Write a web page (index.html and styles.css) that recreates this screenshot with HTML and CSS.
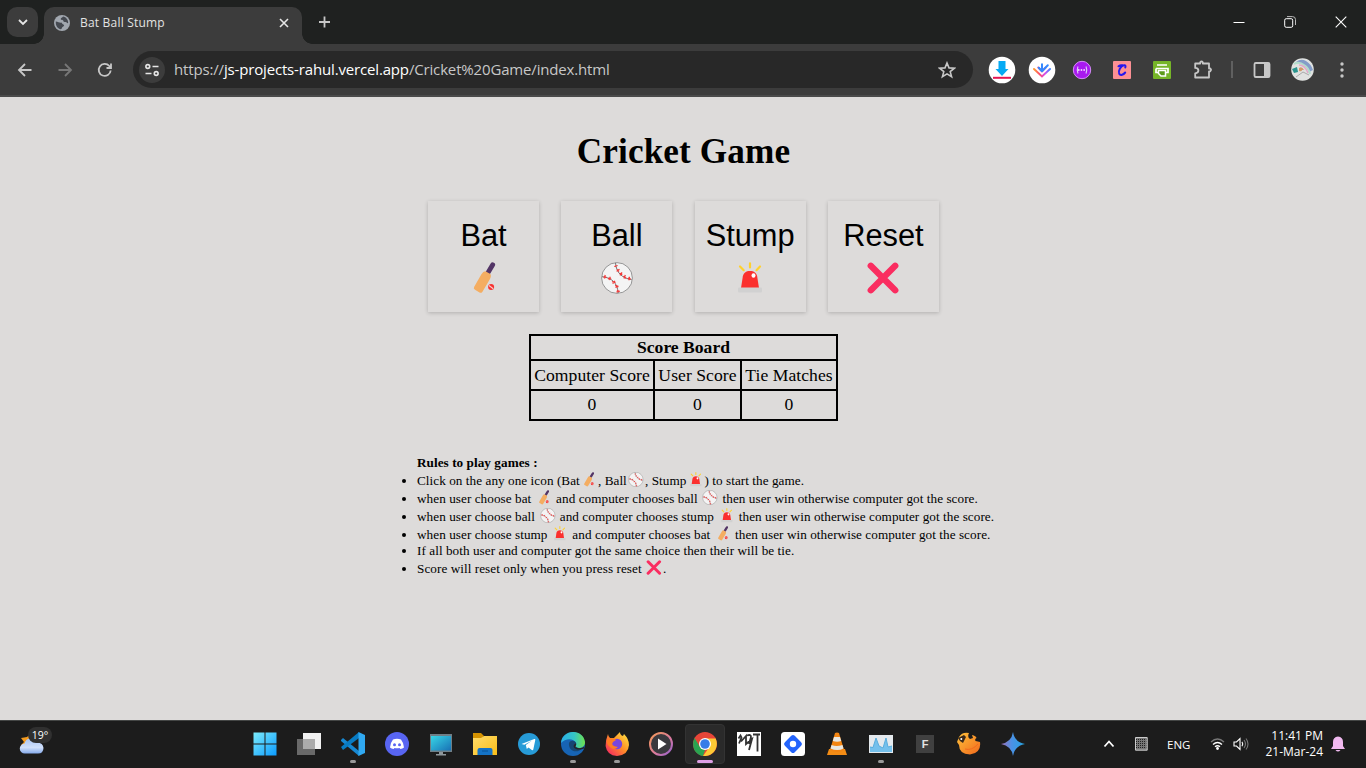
FILE: index.html
```html
<!DOCTYPE html>
<html lang="en">
<head>
<meta charset="utf-8">
<title>Bat Ball Stump</title>
<link rel="stylesheet" href="styles.css">
</head>
<body>
<svg class="defs" aria-hidden="true">
  <defs>
    <linearGradient id="gw" x2="1" y2="1"><stop stop-color="#7cecfc"/><stop offset="1" stop-color="#0b9bff"/></linearGradient>
    <linearGradient id="gcloud" x2="0" y2="1"><stop stop-color="#a9c4f3"/><stop offset=".6" stop-color="#d0e0fb"/><stop offset="1" stop-color="#85aaeb"/></linearGradient>
    <linearGradient id="gmon" x2="1" y2="1"><stop stop-color="#38d6e6"/><stop offset="1" stop-color="#1871b5"/></linearGradient>
    <linearGradient id="gfold" x2="1" y2="1"><stop stop-color="#ffdc6c"/><stop offset="1" stop-color="#f9bd17"/></linearGradient>
    <linearGradient id="gedge" x2="1" y2="0"><stop stop-color="#2aaee8"/><stop offset=".55" stop-color="#35c6c5"/><stop offset="1" stop-color="#6ee24d"/></linearGradient>
    <linearGradient id="gff" x1="1" x2="0" y2="1"><stop stop-color="#fff04a"/><stop offset=".45" stop-color="#ff9425"/><stop offset="1" stop-color="#f4156b"/></linearGradient>
    <linearGradient id="gmp" x2="1" y2="1"><stop stop-color="#f59a55"/><stop offset=".6" stop-color="#d879a0"/><stop offset="1" stop-color="#8f5fd0"/></linearGradient>
    <linearGradient id="ggem" x2="1" y2="0"><stop stop-color="#a070b8"/><stop offset=".45" stop-color="#4b91e5"/><stop offset="1" stop-color="#25a5e0"/></linearGradient>
    <linearGradient id="gbird" x2="1" y2="1"><stop stop-color="#ffc23a"/><stop offset="1" stop-color="#f0681c"/></linearGradient>
    <linearGradient id="gvee" x2="1" y2="0"><stop stop-color="#ff9b31"/><stop offset=".35" stop-color="#ff4c72"/><stop offset=".7" stop-color="#d64cf0"/><stop offset="1" stop-color="#3e82ff"/></linearGradient>
    <symbol id="bat" viewBox="0 0 42 32">
      <path d="M29.7 2.8 25.4 10" stroke="#533566" stroke-width="4.800" stroke-linecap="round"/>
      <path d="m22.400 9.300 5 2.800c.9 1.800.4 3.400-.7 5.400l-7.400 12.400q-1.200 1.400-2.800.5l-4.500-2.600q-1.900-1.200-.9-2.800l7.300-12.800q1.700-2.900 4-2.900z" fill="#f4ad61"/>
      <circle cx="28.100" cy="25" r="3" fill="#f8312f"/><path d="m26 23.500 4.200 3.200" stroke="#f2cfcd" stroke-width="1.100"/>
    </symbol>
    <symbol id="ball" viewBox="0 0 42 32">
      <circle cx="21" cy="16" r="15.400" fill="#f4f4f4" stroke="#959595" stroke-width="1"/>
      <path d="M19.500.8c.7 9.500 6 15.300 16.100 16.800M6 14.700c10 1 15.300 6.300 16.200 16.300" stroke="#747474" stroke-width="1" fill="none"/>
      <path d="m18.300 4.500 3.300-1m-2.300.5.5 1M20.500 9.300l3-2m-2.500.2 2 2M24 13.300l2-3m-2.200 1 2.500 1.300M28 16.500l1.300-3.500m-2 1.300 2.700 2M33 18.300l.4-3.500m-1.500 1.500 2.800.7M8.500 16.500l.7-3.500M7.500 15l3 .3M13 18l1.300-3.300M12 16.300l3.200.5M16.700 21.600l2.300-2.800m-3 .9 3.500 1M19.500 25.500l2.800-1.800m-3-.6 3 2M20.500 30l3.300-.8m-2.700-1.300 2 2" stroke="#f33a39" stroke-width="1.300" fill="none"/>
    </symbol>
    <symbol id="siren" viewBox="0 0 42 32">
      <path d="m11 4.500 3.700 3.700M21 1.300V5.500M31 4.500l-3.500 3.700" stroke="#ffd12e" stroke-width="2.200" stroke-linecap="round"/>
      <path d="M12 26l1.800-11.500C14.400 11 17 9 21 9s6.600 2 7.200 5.500L30 26z" fill="#fb302e"/><ellipse cx="24.500" cy="13.500" rx="2" ry="2.300" fill="#fff"/>
      <rect x="9" y="25.500" width="24" height="5" rx="1" fill="#d1d1d1"/>
    </symbol>
    <symbol id="cross" viewBox="0 0 42 32"><path d="m8.800 3.800 24.400 24.400m0-24.400L8.800 28.200" stroke="#fa2d60" stroke-width="6.400" stroke-linecap="round"/></symbol>
  </defs>
</svg>

<header class="titlebar">
  <button class="tab-search"><svg width="12" height="12" viewBox="0 0 12 12"><path d="m2 4 4 4 4-4" class="ln light"/></svg></button>
  <div class="tab">
    <svg class="globe" width="16" height="16" viewBox="0 0 16 16"><circle cx="8" cy="8" r="8" fill="#a1a7af"/><path d="M1.800 6.500c2.300.3 3.600 1.300 5.500 1.100 1 .4.600 1.600 2 1.900 1.600.2.500 2-.8 2.500-.8.600-.4 2-1.600 2.200-3-.2-5.500-3.200-5.100-7.700zM9 1.500c-.5 1.500-2.300 1.200-2.300 2.700.8 1.300 1.700.2 2.500 1.300 0 1.500 1.600 1.700 2.500 1.600 1 .1 1.300 1.300 2.500 1C14.200 4.500 12 2 9 1.500z" fill="#454950"/></svg>
    <span class="tab-title">Bat Ball Stump</span>
    <svg class="tab-close" width="10" height="10" viewBox="0 0 10 10"><path d="m1 1 8 8m0-8-8 8" class="ln light close"/></svg>
  </div>
  <svg class="new-tab" width="14" height="14" viewBox="0 0 14 14"><path d="M7.500 1.500v11M2 7h11" class="ln"/></svg>
  <div class="window-controls">
    <svg width="12" height="12" viewBox="0 0 12 12"><path d="M.5 6.500h11" stroke="#fff"/></svg>
    <svg width="12" height="12" viewBox="0 0 12 12"><path d="M3 .6h5.500q3 0 3 3V9" stroke="#bbb" fill="none"/><rect x=".7" y="2.700" width="8" height="8.600" rx="1.500" stroke="#fff" fill="none"/></svg>
    <svg width="12" height="12" viewBox="0 0 12 12"><path d="m.7.7 10.600 10.600m0-10.600L.7 11.300" stroke="#fff" stroke-width="1.100"/></svg>
  </div>
</header>

<nav class="toolbar">
  <div class="nav-buttons">
    <svg width="16" height="16" viewBox="0 0 16 16"><path d="M14.500 8H2m6-6L2 8l6 6" class="ln"/></svg>
    <svg width="16" height="16" viewBox="0 0 16 16"><path d="M1.500 8H14M8 2l6 6-6 6" class="ln dim"/></svg>
    <svg width="16" height="16" viewBox="0 0 16 16"><path d="M13.700 8.500A6 6 0 1 1 12.300 4l1.200 1.500M14 1.500V6H9.500" class="ln"/></svg>
  </div>
  <div class="omnibox">
    <span class="site-info"><svg width="16" height="16" viewBox="0 0 16 16"><g class="ln light info"><circle cx="3.800" cy="4.500" r="1.900"/><path d="M8.500 4.500h6M1.500 11.500h6"/><circle cx="12.200" cy="11.500" r="1.900"/></g></svg></span>
    <span class="url">https://<b>js-projects-rahul.vercel.app</b>/Cricket%20Game/index.html</span>
    <svg class="star" width="18" height="18" viewBox="0 0 18 18"><path d="m9 2 2 4.900 5.400.3-4.200 3.400 1.400 5.200L9 12.900l-4.600 2.900 1.400-5.200L1.600 7.200 7 6.900z" class="ln info"/></svg>
  </div>
  <div class="extensions">
    <svg width="28" height="28" viewBox="0 0 28 28"><circle cx="14" cy="14" r="13.300" fill="#fff"/><path d="M10.500 5h7v8h3L14 20 7.500 13h3z" fill="#05aaf4"/><path d="M5 21.800h18" stroke="#e51652" stroke-width="2"/></svg>
    <svg width="28" height="28" viewBox="0 0 28 28"><circle cx="14" cy="14" r="13.300" fill="#fff"/><path d="m6 13 8 7.500 8-7.500" stroke="url(#gvee)" class="vee"/><path d="m10.300 11.500 3.700 3.800 3.700-3.800" stroke="#f04f8c" class="vee"/><path d="M14 15.200V8.300m0 6.900-3.200-3.400M14 15.200l5.800-6" stroke="#3488ff" class="vee"/></svg>
    <svg width="20" height="20" viewBox="0 0 20 20"><circle cx="10" cy="10" r="8.700" fill="#a91aef" stroke="#d58cf8"/><path d="M6 6.500q-1.500 3.500 0 7M14 6.500q1.500 3.500 0 7" stroke="#ded1f7" fill="none" stroke-width="1.100"/><path d="M6 10h8" stroke="#fff" stroke-width="1.500" stroke-dasharray="1.500 1.200"/></svg>
    <svg width="18" height="18" viewBox="0 0 18 18"><rect width="18" height="18" rx="1" fill="#fc9094"/><path d="M12.300 6.500q.8-2.800-1.500-2.200C7.500 5 5 10 6.200 12.800c1.300 2.300 4.300.8 6-1.300M5.500 5.300q2-1.600 4-1" stroke="#2417ee" stroke-width="2" fill="none" stroke-linecap="round"/></svg>
    <svg width="18" height="18" viewBox="0 0 18 18"><rect width="18" height="18" rx="1" fill="#76b528"/><path d="M4 4h10M3 7.500h12v4h-2M3 7.500v4h2" stroke="#fff" stroke-width="1.700" fill="none"/><path d="M5.500 9.500h7V15H8l-2.500-2.500z" fill="#5c9b1c" stroke="#fff" stroke-width="1.500"/></svg>
    <svg width="20" height="20" viewBox="0 0 20 20"><path d="M2.200 3.500h5V2.300q1.300-1.600 2.600 0v1.200H16v5h1.200q1.700 1.300 0 2.800H16v6.200H2.200v-4.200q3.200-.5 3.200-2.800T2.200 7.900z" class="ln" stroke-linejoin="round"/></svg>
  </div>
  <span class="separator"></span>
  <svg width="18" height="18" viewBox="0 0 18 18"><rect x="1.500" y="2" width="15" height="14" rx="1.300" class="ln"/><path d="M11 2h5.500v14H11z" fill="#c7c7c7"/></svg>
  <svg class="avatar" width="23" height="23" viewBox="0 0 23 23"><circle cx="11.500" cy="11.500" r="11.300" fill="#e0e2e0"/><path d="M5 4q5-4 10-1 5 3 7 9l-4 2q-3-9-13-9z" fill="#849cc8"/><path d="M3 6q5-3 10 1 5 3 6 9" stroke="#b1dccb" stroke-width="2" fill="none"/><path d="M8 7q6 0 9 8" stroke="#e3a7c9" stroke-width="1.500" fill="none"/><path d="m1 11 5-2 1 5-4 1z" fill="#2b958e"/><path d="M8 10q3-2 5 2l-2 0q0 2-3 1z" fill="#d29b6a"/><path d="m5 19 7-5 6 3" stroke="#aaa" fill="none"/></svg>
  <svg class="dots" width="4" height="18" viewBox="0 0 4 18"><g fill="#c7c7c7"><circle cx="2" cy="3" r="1.700"/><circle cx="2" cy="9" r="1.700"/><circle cx="2" cy="15" r="1.700"/></g></svg>
</nav>

<main class="page">
  <h1>Cricket Game</h1>
  <div class="choices">
    <button class="choice"><span>Bat</span><svg class="big"><use href="#bat"/></svg></button>
    <button class="choice"><span>Ball</span><svg class="big"><use href="#ball"/></svg></button>
    <button class="choice"><span>Stump</span><svg class="big"><use href="#siren"/></svg></button>
    <button class="choice"><span>Reset</span><svg class="big"><use href="#cross"/></svg></button>
  </div>
  <table class="score">
    <colgroup><col class="c1"><col class="c2"><col class="c3"></colgroup>
    <tr class="head"><th colspan="3">Score Board</th></tr>
    <tr class="names"><td>Computer Score</td><td>User Score</td><td>Tie Matches</td></tr>
    <tr class="values"><td>0</td><td>0</td><td>0</td></tr>
  </table>
  <section class="rules">
    <h2>Rules to play games :</h2>
    <ul>
      <li>Click on the any one icon (Bat<svg class="em"><use href="#bat"/></svg>, Ball<svg class="em"><use href="#ball"/></svg>, Stump<svg class="em"><use href="#siren"/></svg>) to start the game.</li>
      <li>when user choose bat <svg class="em"><use href="#bat"/></svg> and computer chooses ball <svg class="em"><use href="#ball"/></svg> then user win otherwise computer got the score.</li>
      <li>when user choose ball <svg class="em"><use href="#ball"/></svg> and computer chooses stump <svg class="em"><use href="#siren"/></svg> then user win otherwise computer got the score.</li>
      <li>when user choose stump <svg class="em"><use href="#siren"/></svg> and computer chooses bat <svg class="em"><use href="#bat"/></svg> then user win otherwise computer got the score.</li>
      <li class="short">If all both user and computer got the same choice then their will be tie.</li>
      <li class="tall">Score will reset only when you press reset <svg class="em"><use href="#cross"/></svg>.</li>
    </ul>
  </section>
</main>

<footer class="taskbar">
  <div class="weather">
    <svg width="26" height="24" viewBox="0 0 26 24"><path d="m11 2-3 3-6 1 3 4-3 3h9z" fill="#f39b1f"/><path d="M6 21.500a5 5 0 0 1-.5-10Q7 6 12 6.500q4 .2 5.500 4.300 6.500-.3 7 5.200-.2 5.500-5.500 5.500z" fill="url(#gcloud)"/></svg>
    <span class="badge">19°</span>
  </div>
  <div class="apps">
    <div class="app"><svg viewBox="0 0 24 24"><path d="M.5.500h11v11H.5zM12.500.500h11v11h-11zM.5 12.500h11v11H.5zM12.500 12.500h11v11h-11z" fill="url(#gw)"/></svg></div>
    <div class="app"><svg viewBox="0 0 24 24"><path d="M6 1h18v16H6z" fill="#f1f1f1"/><path d="M0 7h18v16H0z" fill="#696969"/><path d="M6 7h12v10H6z" fill="#ababab"/></svg></div>
    <div class="app open"><svg viewBox="0 0 24 24"><path d="m0 8 2-2 16 13v5L0 9z" fill="#1788d2"/><path d="m0 15 2 3L18 6V0L0 15z" fill="#087bc3"/><path d="m17.500 0 6.500 3v18l-6.500 3z" fill="#30a9f1"/></svg></div>
    <div class="app"><svg viewBox="0 0 24 24"><circle cx="12" cy="12" r="12" fill="#5865f2"/><path d="M8 7.500q4-1.400 8 0 2.800 3.500 3 8-1.400 1.300-3.600 1.600L14.500 16q-2.500.6-5 0l-.9 1.100Q6.400 16.800 5 15.500q.2-4.500 3-8z" fill="#fff"/><circle cx="9.500" cy="12.800" r="1.500" fill="#5865f2"/><circle cx="14.500" cy="12.800" r="1.500" fill="#5865f2"/></svg></div>
    <div class="app"><svg viewBox="0 0 24 24"><path d="M1 2h22v18H1z" fill="#6f7e86"/><path d="M2 4h20v14.500H2z" fill="url(#gmon)"/><path d="M10 20h4v2h3v1.500H7V22h3z" fill="#8f989c"/></svg></div>
    <div class="app"><svg viewBox="0 0 24 24"><path d="M0 1h8l3 3-3 3H0z" fill="#d59200"/><path d="M0 6h8l3-2h13v19H0z" fill="url(#gfold)"/><path d="M4.500 23v-5q.2-2 2-2h11q2 0 2 2v5z" fill="#1473c6"/><path d="M9 19h6" stroke="#075296"/></svg></div>
    <div class="app"><svg viewBox="0 0 24 24"><circle cx="12" cy="12" r="11" fill="#279bd7"/><path d="m4.500 12 12.800-5q1.200-.3 1 1l-2 9.500q-.4 1-1.500.4l-3.300-2.500-1.700 1.500-1-4 6-4.200-7.500 4z" fill="#fff"/></svg></div>
    <div class="app open"><svg viewBox="0 0 24 24"><circle cx="12" cy="12" r="12" fill="#1764b4"/><path d="M0 11C1-3 22-4 24 10c.2 6-6 7-9 5.500-2-1.200 1-2 0-4.500C13 5.800 4 6 0 11z" fill="url(#gedge)"/><path d="M8 11c1-3 6-3 7 0-3 1-1 6 7 5-7 7-15 2-14-5z" fill="#164674"/><path d="M15 11c1 3-2 3.500 0 4.500 3 1.500 7 .5 8-1v2c-4 2-9 1-10-1-1-2 0-3 2-4.500z" fill="#252525"/></svg></div>
    <div class="app open"><svg viewBox="0 0 24 24"><path d="M3 2q0 2 2 4l4 0q3-3 6-6 0 3 3 4l1-2q5 5 5 11-.6 10-12 11Q2 23.500.600 14 .500 8 3 2z" fill="url(#gff)"/><circle cx="12" cy="12" r="5.200" fill="#7846dc"/><path d="M2 8q5-4 9 0l-3 2q-3 4 5 5-4 4-8 0-4-3-3-7z" fill="#ff7d22"/></svg></div>
    <div class="app"><svg viewBox="0 0 24 24"><circle cx="12" cy="12" r="11" fill="#3a393e" stroke="url(#gmp)" stroke-width="2"/><path d="m9 6.500 8.500 5.500L9 17.500z" fill="#fff"/></svg></div>
    <div class="app active"><svg viewBox="0 0 24 24"><circle cx="12" cy="12" r="12" fill="#e74538"/><path d="M1.600 6 7 15l5 3-2 6C1 22.500-2 13 1.600 6z" fill="#2aa451"/><path d="M12 6.500h10.700c4 9-3 18.500-12.700 17.500l6.500-9z" fill="#fdca35"/><circle cx="12" cy="12" r="6" fill="#fff"/><circle cx="12" cy="12" r="4.800" fill="#377ce8"/></svg></div>
    <div class="app"><svg viewBox="0 0 24 24"><path d="M0 0h24v24H0z" fill="#fff"/><path d="m1.500 6.500 2-3 1 2-2.500 6M4 9.500l5-5.500v8l6-5-3 11M10 3.500q4-1.500 4 1.500l-2 7M16 2.500h7m-2.500 0v17" stroke="#333" stroke-width="1.800" fill="none"/></svg></div>
    <div class="app"><svg viewBox="0 0 24 24"><rect width="24" height="24" rx="3.500" fill="#fff"/><rect x="5" y="5" width="14" height="14" rx="2.500" transform="rotate(45 12 12)" fill="#2464fc"/><circle cx="12" cy="12" r="3.200" fill="#fff"/></svg></div>
    <div class="app"><svg viewBox="0 0 24 24"><path d="M4 17h16l2 6H2z" fill="#f38c15"/><path d="m10 1q2-1 4 0l5 17q-7 4-14 0z" fill="#f38512"/><path d="m9 5h6l1.200 4q-4 1.500-8.400 0zM6.500 13q5 2 11 0l1 3.500q-6 3-13 0z" fill="#e8e7e2"/></svg></div>
    <div class="app open"><svg viewBox="0 0 24 24"><path d="M0 3h24v18H0z" fill="#e4e9ed"/><path d="M1 15h3l3-9 3 8 4 2 3-10 2 9 4-1v6H1z" fill="#74c0ec"/><path d="m1 15 3 .5L7 6l3 8 4 2 3-10 2 9 4-1" stroke="#59addd" fill="none"/></svg></div>
    <div class="app"><span class="f-key">F</span></div>
    <div class="app"><svg viewBox="0 0 24 24"><path d="M2 5Q5-.3 12 1q-2 4 1 6l3-1-1-3q4 1 4.500 3-2 1-1 3l4.500 1q1.500 11-10 12.500Q2 22 2 13l-2-3z" fill="url(#gbird)"/><path d="m1 6 6-3 2 2-3 6-3-2z" fill="#39291b"/><circle cx="4.300" cy="7" r="1" fill="#fff"/><path d="M8 17q7 2 13-5" stroke="#f36a20" fill="none"/></svg></div>
    <div class="app"><svg viewBox="0 0 24 24"><path d="M12 0q1.500 10 12 12-10.500 2-12 12-1.500-10-12-12Q10.500 10 12 0z" fill="url(#ggem)"/></svg></div>
  </div>
  <div class="tray">
    <svg width="12" height="8" viewBox="0 0 12 8"><path d="m1.500 6.500 4.500-5 4.500 5" class="ln white"/></svg>
    <svg class="pad" width="13" height="14" viewBox="0 0 13 14"><path d="M.5.500h11.700v12.700H.5z" fill="#777"/><path d="M1 2.500h10.500M1 4.500h10.500M1 6.500h10.500M1 8.500h10.500M1 10.500h10.500" stroke="#222" stroke-dasharray="1 1"/><path d="M.5 13.200V.5h11.700v12.700z" fill="none" stroke="#ccc"/></svg>
    <span class="lang">ENG</span>
    <svg class="wifi" width="15" height="12" viewBox="0 0 15 12"><path d="M1 4q6.500-6 13 0" class="ln dim thin"/><path d="M3 6.500q4.500-4 9 0M5 8.800q2.500-2 5 0" class="ln white thin"/><circle cx="7.500" cy="10.500" r="1.400" fill="#fff"/></svg>
    <svg class="sound" width="16" height="14" viewBox="0 0 16 14"><path d="M1 5h2.500L7 1.500v11L3.500 9H1zM9 4.800q1.500 2 0 4.400" class="ln white speaker"/><path d="M11 3q3 4 0 8M13 1.500q4 5.500 0 11" class="ln dim speaker"/></svg>
    <div class="clock"><span>11:41 PM</span><span>21-Mar-24</span></div>
    <svg class="bell" width="14" height="16" viewBox="0 0 14 16"><path d="M2 6q0-5 5-5.500Q12 1 12 6v4l2 3H0l2-3zM4.500 14h5Q7 17 4.500 14z" fill="#f0b9ef"/></svg>
  </div>
</footer>
</body>
</html>
```
FILE: styles.css
```css
* { box-sizing: border-box; }
body {
  margin: 0;
  height: 768px;
  overflow: hidden;
  display: flex;
  flex-direction: column;
  background: #dddbda;
  font-family: "Liberation Serif", "Times New Roman", serif;
}
button { border: 0; padding: 0; background: none; color: inherit; }
svg { flex: none; }
.defs { position: absolute; width: 0; height: 0; }
.ln { fill: none; stroke: #c7c7c7; stroke-width: 1.8; }
.ln.light { stroke: #e6e6e6; }
.ln.white { stroke: #fff; }
.ln.dim { stroke: #777; }
.ln.thin { stroke-width: 1.4; }
.ln.info, .ln.close { stroke-width: 1.6; }
.ln.speaker { stroke-width: 1.1; }
.vee { fill: none; stroke-width: 2; stroke-linecap: round; }

.titlebar, .toolbar, .taskbar { font-family: "Open Sans", "Noto Sans", sans-serif; color: #e3e3e3; flex: none; }
.titlebar { height: 44px; background: #1f2120; display: flex; padding-left: 7px; }
.tab-search { width: 31px; height: 30px; margin-top: 7px; border-radius: 10px; background: #3c3c3c; display: grid; place-items: center; }
.tab {
  position: relative;
  width: 258px;
  height: 37px;
  margin: 7px 0 0 6px;
  padding: 0 13px 6px 10px;
  display: flex;
  align-items: center;
  background: #3c3c3c;
  border-radius: 10px 10px 0 0;
}
.tab::before, .tab::after { content: ""; position: absolute; bottom: 0; width: 10px; height: 10px; }
.tab::before { right: 100%; background: radial-gradient(circle at 0 0, transparent 9.5px, #3c3c3c 10px); }
.tab::after { left: 100%; background: radial-gradient(circle at 100% 0, transparent 9.5px, #3c3c3c 10px); }
.tab-title { margin-left: 10px; font-size: 12px; letter-spacing: .2px; white-space: nowrap; }
.tab-close { margin-left: auto; }
.new-tab { margin: 15px 0 0 15px; }
.window-controls { margin: 16px 19px 0 auto; display: flex; gap: 39px; }

.toolbar { height: 53px; background: #3c3c3c; border-bottom: 2px solid #4a4a4a; display: flex; align-items: center; }
.nav-buttons { display: flex; gap: 24px; margin-left: 17px; }
.omnibox { width: 840px; height: 37px; margin-left: 20px; padding: 0 17px 0 6px; border-radius: 19px; background: #282828; display: flex; align-items: center; }
.site-info { width: 26px; height: 26px; border-radius: 50%; background: #3c3c3c; display: grid; place-items: center; }
.url { margin-left: 9px; padding-bottom: 2px; font-size: 15px; letter-spacing: -.16px; color: #c7c7c7; white-space: nowrap; }
.url b { font-weight: 400; color: #fff; }
.star { margin-left: auto; }
.extensions { margin-left: 15px; display: flex; align-items: center; }
.extensions svg:nth-child(2) { margin-left: 12px; }
.extensions svg:nth-child(3) { margin-left: 16px; }
.extensions svg:nth-child(4) { margin-left: 21px; }
.extensions svg:nth-child(5) { margin-left: 22px; }
.extensions svg:nth-child(6) { margin-left: 22px; }
.separator { width: 2px; height: 17px; margin: 0 20px 0 18px; background: #606060; }
.avatar { margin-left: 20px; }
.dots { margin-left: 26px; }

.page { height: 623px; color: #000; }
h1 { margin: 34px 0 0; height: 41px; line-height: 41px; font-size: 35.2px; letter-spacing: .12px; text-align: center; padding-left: 1px; }
.choices { display: flex; justify-content: center; gap: 22.3px; margin-top: 29px; padding-left: 1px; }
.choice {
  width: 111px;
  height: 111px;
  padding-top: 15px;
  display: flex;
  flex-direction: column;
  align-items: center;
  font: 30.8px/40px "Liberation Sans", Arial, sans-serif;
  box-shadow: 0 1px 4px rgba(0, 0, 0, .2);
}
.big { width: 42px; height: 32px; margin-top: 6px; }
.score { width: 309px; table-layout: fixed; margin: 22px 0 0 529px; border-collapse: collapse; font-size: 17.6px; text-align: center; }
.score th, .score td { border: 2px solid #000; padding: 0; line-height: 20px; white-space: nowrap; }
.score td { letter-spacing: .06px; }
.score .values td { padding-bottom: 2px; }
.c1 { width: 124px; }
.c2 { width: 87px; }
.c3 { width: 96px; }
.score .head { height: 25px; }
.score .head th { line-height: 19px; padding-bottom: 1px; }
.names, .values { height: 30px; }
.rules { margin: 33px 0 0 417px; font-size: 13.2px; line-height: 18px; letter-spacing: .056px; white-space: nowrap; }
.rules h2 { margin: 0; font-size: inherit; line-height: 18px; }
.rules ul { margin: 0; padding: 0; }
.rules li { height: 18px; }
.rules .short { height: 14px; line-height: 14px; }
.rules .tall { height: 22px; line-height: 22px; }
.em { width: 19.7px; height: 15px; margin: -1px -.8px 0; vertical-align: -2px; }

.taskbar { height: 48px; background: #1c1c1c; border-top: 1px solid #444645; display: grid; grid-template-columns: 243px 792px 1fr; }
.weather { position: relative; padding: 11px 0 0 19px; }
.badge { position: absolute; left: 28px; top: 6px; width: 24px; height: 16px; border-radius: 8px; background: #303030; font-size: 10.5px; line-height: 16px; text-align: center; color: #fff; }
.apps { display: flex; }
.app { position: relative; width: 44px; height: 47px; padding-bottom: 2px; display: grid; place-items: center; }
.app svg { width: 24px; height: 24px; position: relative; }
.app.open::after, .app.active::after { content: ""; position: absolute; bottom: 5px; left: 19px; width: 6px; height: 3px; border-radius: 2px; background: #999; }
.app.active::before { content: ""; position: absolute; inset: 3px 2px 4px; border-radius: 4px; background: #2a2a2a; border: 1px solid #333; }
.app.active::after { left: 14px; width: 16px; background: #dfa0e6; }
.f-key { width: 18px; height: 18px; background: #404040; font: bold 11px/18px "Liberation Sans", sans-serif; text-align: center; }
.tray { display: flex; align-items: center; padding: 0 0 2px 68px; color: #fff; }
.pad { margin-left: 20px; }
.lang { width: 24px; margin-left: 19px; padding-top: 2px; font-size: 11.5px; white-space: nowrap; }
.wifi { margin-left: 19px; }
.sound { margin-left: 8px; }
.clock { width: 74px; display: flex; flex-direction: column; align-items: flex-end; font-size: 12px; line-height: 16px; white-space: nowrap; }
.bell { margin-left: 8px; }
```
